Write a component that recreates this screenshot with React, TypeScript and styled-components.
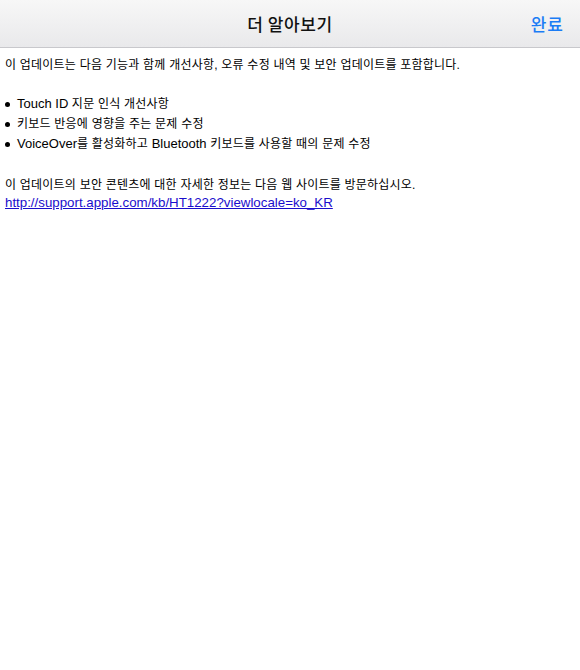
import React from "react";
import styled, { createGlobalStyle } from "styled-components";

const Global = createGlobalStyle`
  html, body { margin: 0; padding: 0; background: #ffffff; }
  body { font-family: "Liberation Sans", "Noto Sans CJK KR", sans-serif; }
`;

const Page = styled.div`
  width: 580px;
  min-height: 670px;
  background: #ffffff;
  display: flex;
  flex-direction: column;
`;

const NavBar = styled.header`
  height: 47px;
  border-bottom: 1px solid #c8c8cc;
  background: linear-gradient(#f7f7f7, #e9e9eb);
  display: grid;
  grid-template-columns: 1fr auto 1fr;
  align-items: center;
  padding: 0 16px 0 16px;
`;

const Title = styled.h1`
  grid-column: 2;
  margin: 0;
  font-family: "Noto Sans CJK KR", sans-serif;
  font-size: 17px;
  font-weight: 500;
  color: #111;
  letter-spacing: 0.6px;
`;

const Done = styled.button`
  grid-column: 3;
  justify-self: end;
  border: none;
  background: none;
  padding: 0;
  font-family: "Noto Sans CJK KR", sans-serif;
  font-size: 17px;
  font-weight: 500;
  color: #1b7cf5;
  letter-spacing: 1px;
  cursor: pointer;
`;

const Content = styled.main`
  padding: 9px 5px;
  font-size: 12px;
  letter-spacing: 0.22px;
  color: #000;
`;

const Para = styled.p<{ $top: number }>`
  margin: ${(p) => p.$top}px 0 0;
  line-height: 17px;
`;

const Latin = styled.span`
  font-size: 13px;
  letter-spacing: 0;
`;

const List = styled.ul`
  margin: 20px 0 0;
  padding: 0;
  list-style: none;
`;

const Item = styled.li`
  display: flex;
  align-items: center;
  line-height: 19.5px;
`;

const Bullet = styled.span`
  width: 5px;
  height: 5px;
  border-radius: 50%;
  background: #000;
  margin: 0 7px 0 0;
  flex-shrink: 0;
`;

const Link = styled.a`
  display: block;
  width: max-content;
  color: #1a0dcc;
  text-decoration: underline;
  font-size: 13.3px;
  letter-spacing: 0;
  line-height: 17px;
`;

export default function App() {
  return (
    <>
      <Global />
      <Page>
        <NavBar>
          <Title>더 알아보기</Title>
          <Done>완료</Done>
        </NavBar>
        <Content>
          <Para $top={0}>이 업데이트는 다음 기능과 함께 개선사항, 오류 수정 내역 및 보안 업데이트를 포함합니다.</Para>
          <List>
            <Item><Bullet /><span><Latin>Touch ID</Latin> 지문 인식 개선사항</span></Item>
            <Item><Bullet />키보드 반응에 영향을 주는 문제 수정</Item>
            <Item><Bullet /><span><Latin>VoiceOver</Latin>를 활성화하고 <Latin>Bluetooth</Latin> 키보드를 사용할 때의 문제 수정</span></Item>
          </List>
          <Para $top={22}>이 업데이트의 보안 콘텐츠에 대한 자세한 정보는 다음 웹 사이트를 방문하십시오.</Para>
          <Link href="#">http://support.apple.com/kb/HT1222?viewlocale=ko_KR</Link>
        </Content>
      </Page>
    </>
  );
}
